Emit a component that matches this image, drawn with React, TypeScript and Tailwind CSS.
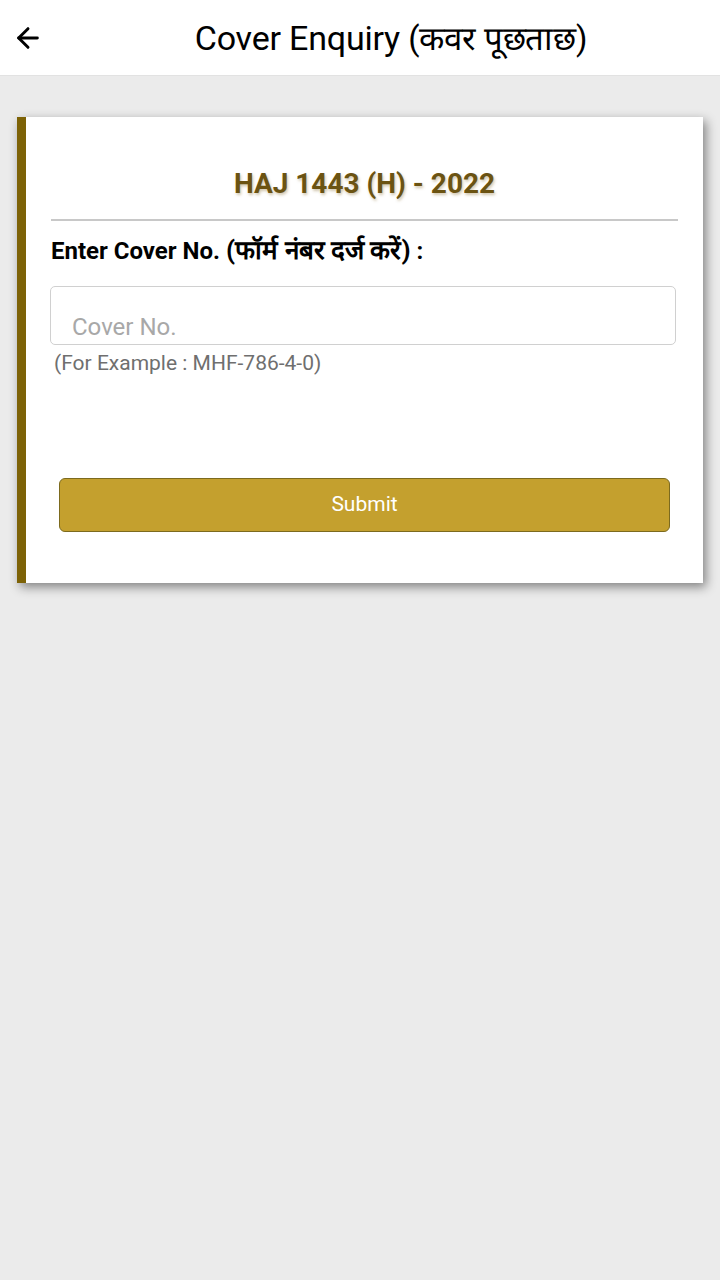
import { ArrowLeft } from "lucide-react";

export default function App() {
  return (
    <div className="min-h-[1280px] w-[720px] bg-[#ebebeb] font-['Roboto',sans-serif]">
      <header className="relative flex h-[76px] items-center justify-center border-b border-[#e2e2e2] bg-white pl-[62px]">
        <button className="absolute left-[12px] top-[22px] text-black">
          <ArrowLeft size={32} strokeWidth={2.2} />
        </button>
        <h1 className="text-[34px] leading-none tracking-[-0.2px] text-black">
          Cover Enquiry <span className="text-[33px]">(कवर पूछताछ)</span>
        </h1>
      </header>

      <div className="px-[17px] pt-[41px]">
        <div className="flex border-l-[9px] border-[#7d6206] bg-white shadow-[3px_4px_10px_rgba(0,0,0,0.45)]">
          <div className="flex-1 px-[25px] pb-[51px] pt-[49px]">
            <h2 className="text-center text-[28px] font-bold leading-[36px] text-[#6b5312] [text-shadow:1px_2px_3px_rgba(120,90,20,0.35)]">
              HAJ 1443 (H) - 2022
            </h2>
            <div className="mt-[17px] h-[2px] bg-[#c8c8c8]" />
            <label className="mt-[15px] block text-[24px] font-bold leading-[28px] text-black">
              Enter Cover No. <span className="text-[26px]">(फॉर्म नंबर दर्ज करें)</span> :
            </label>
            <div className="mt-[21px] -ml-px mr-[2px] flex h-[59px] items-end rounded-[5px] border border-[#d0d0d0] px-[21px] pb-[1px]">
              <input
                placeholder="Cover No."
                className="w-full bg-transparent text-[24px] leading-[32px] text-black outline-none placeholder:text-[#a8a8a8]"
              />
            </div>
            <p className="mt-[4px] pl-[3px] text-[21px] leading-[28px] text-[#6f6f6f]">
              (For Example : MHF-786-4-0)
            </p>
            <button className="mx-[8px] mt-[101px] flex h-[54px] w-[611px] items-center justify-center rounded-[6px] border border-[#7c6a1e] bg-[#c4a02e] text-[21px] text-white">
              Submit
            </button>
          </div>
        </div>
      </div>
    </div>
  );
}
